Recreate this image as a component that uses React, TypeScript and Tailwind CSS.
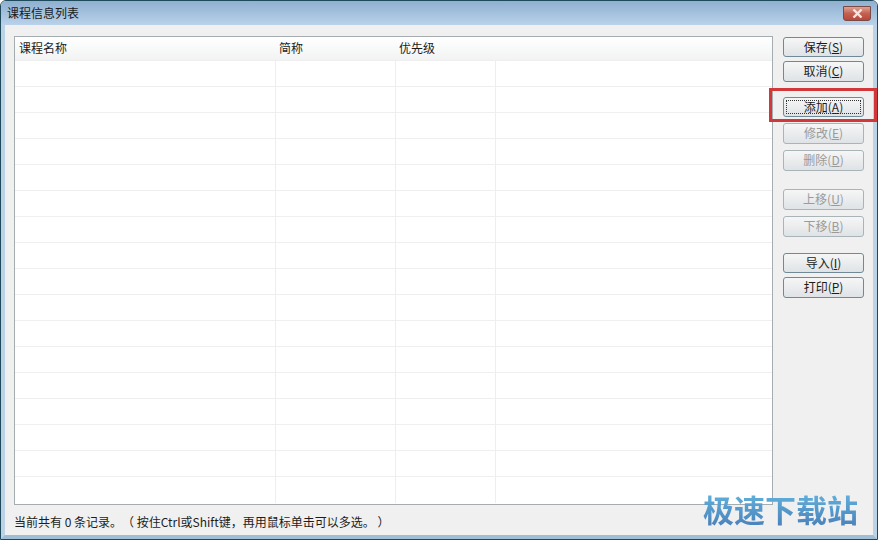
const font = { fontFamily: '"Noto Sans CJK SC", "Liberation Sans", sans-serif' };

const rowCount = 17;

function Btn({ label, hot, disabled, focus, className }: { label: string; hot: string; disabled?: boolean; focus?: boolean; className?: string }) {
  return (
    <div
      className={
        "relative w-[81px] shrink-0 rounded-[3px] border flex items-center justify-center pb-[1px] text-[12px] leading-none bg-gradient-to-b from-[#f6f6f6] to-[#dfe3e6] " +
        (disabled ? "border-[#a8b4b8] text-[#9a9a9a] " : "border-[#6f8a96] text-[#1c1c1c] ") +
        (focus ? "border-[#3c7fb1] from-[#e6f3fa] to-[#c4dcea] " : "") +
        (className ?? "")
      }
    >
      {focus && <div className="absolute inset-[2px] border border-dotted border-[#333]" />}
      <span>
        {label}(<span className="underline">{hot}</span>)
      </span>
    </div>
  );
}

function Row({ last }: { last?: boolean }) {
  return (
    <div className={"flex h-[26px] shrink-0 " + (last ? "" : "border-b border-[#efefef]")}>
      <div className="w-[261px] border-r border-[#eeeeee]" />
      <div className="w-[120px] border-r border-[#eeeeee]" />
      <div className="w-[100px] border-r border-[#eeeeee]" />
      <div className="flex-1" />
    </div>
  );
}

export default function App() {
  return (
    <div style={font} className="relative w-[878px] h-[540px] overflow-hidden flex flex-col bg-[#f0f0f0] border border-[#1f4a5c] rounded-t-[6px] [text-spacing-trim:space-all]">
      {/* title bar */}
      <div className="h-[24px] shrink-0 flex items-center justify-between pl-[6px] pr-[6px] bg-gradient-to-b from-[#8fb0d0] to-[#b9d2ea]">
        <span className="text-[12px] text-[#1a1a1a] leading-none">课程信息列表</span>
        <div className="w-[28px] h-[15px] mt-[1px] rounded-b-[3px] border border-[#7a4a44] flex items-center justify-center bg-gradient-to-b from-[#dca396] via-[#c4604f] to-[#b8483a]">
          <svg width="13" height="9" viewBox="0 0 13 9">
            <path d="M2.5 0.5 L10.5 8.5 M10.5 0.5 L2.5 8.5" stroke="#f1e6e2" strokeWidth="2.4" fill="none" />
          </svg>
        </div>
      </div>

      {/* body */}
      <div className="flex-1 flex min-h-0 border-x-[4px] border-b-[4px] border-x-[#bcd3e6] border-b-[#9fbdd4]">
        <div className="w-[768px] shrink-0 flex flex-col pl-[9px] pt-[11px]">
          <div className="w-[759px] h-[469px] shrink-0 flex flex-col overflow-hidden bg-white border border-[#a5adb0]">
            <div className="h-[24px] shrink-0 flex items-center pb-[2px] text-[12px] leading-none text-[#1c1c1c] bg-gradient-to-b from-white to-[#f2f3f4] border-b border-[#eeeeee]">
              <div className="w-[261px] pl-[4px]">课程名称</div>
              <div className="w-[120px] pl-[3px]">简称</div>
              <div className="w-[100px] pl-[3px]">优先级</div>
            </div>
            {Array.from({ length: rowCount }).map((_, i) => (
              <Row key={i} last={i === rowCount - 1} />
            ))}
          </div>
          <div className="mt-[11px] text-[12px] leading-none text-[#1c1c1c] whitespace-pre">
            当前共有 0 条记录。（ 按住Ctrl或Shift键，再用鼠标单击可以多选。 ）
          </div>
        </div>

        {/* button column */}
        <div className="flex-1 flex flex-col pl-[10px] pt-[12px]">
          <Btn label="保存" hot="S" className="h-[20px]" />
          <Btn label="取消" hot="C" className="h-[21px] mt-[4px]" />
          <Btn label="添加" hot="A" focus className="h-[20px] mt-[15px]" />
          <Btn label="修改" hot="E" disabled className="h-[21px] mt-[6px]" />
          <Btn label="删除" hot="D" disabled className="h-[21px] mt-[6px]" />
          <Btn label="上移" hot="U" disabled className="h-[21px] mt-[18px]" />
          <Btn label="下移" hot="B" disabled className="h-[21px] mt-[6px]" />
          <Btn label="导入" hot="I" className="h-[20px] mt-[16px]" />
          <Btn label="打印" hot="P" className="h-[21px] mt-[4px]" />
        </div>
      </div>

      {/* annotation over the add button */}
      <div className="absolute left-[768px] top-[87px] w-[108px] h-[34px] border-[3px] border-[#d2383a]" />

      {/* watermark */}
      <div className="absolute left-[702px] top-[489px] text-[31px] leading-[38px] font-semibold whitespace-nowrap text-transparent bg-clip-text bg-gradient-to-b from-[#62b6e0] to-[#4a7fb8]">
        极速下载站
      </div>
    </div>
  );
}
